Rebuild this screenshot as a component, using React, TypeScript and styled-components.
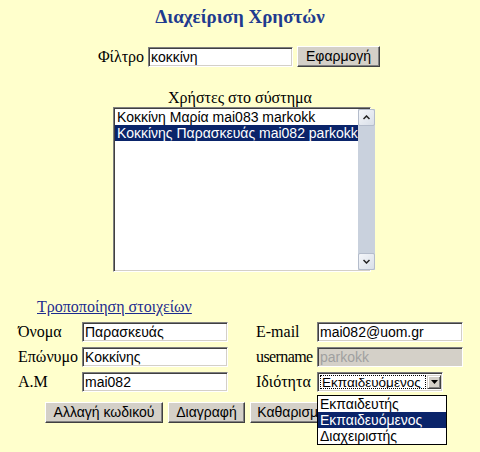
import React from 'react';
import styled, { createGlobalStyle } from 'styled-components';

const GlobalStyle = createGlobalStyle`
  html, body {
    margin: 0;
    padding: 0;
    background: #ffffcc;
  }
  body {
    font-family: "Liberation Serif", "Times New Roman", serif;
    color: #000;
  }
`;

const Page = styled.div`
  width: 480px;
  height: 452px;
  overflow: hidden;
  padding-top: 7px;
  box-sizing: border-box;
`;

const Title = styled.h2`
  margin: 0;
  text-align: center;
  font-family: "Liberation Serif", serif;
  font-weight: bold;
  font-size: 19px;
  line-height: 20px;
  color: #1f3b8f;
`;

const FilterRow = styled.div`
  display: flex;
  justify-content: center;
  align-items: center;
  gap: 4px;
  margin-top: 19px;
  height: 21px;
  padding-right: 2px;
`;

const Label = styled.span<{ $tight?: boolean }>`
  font-family: "Liberation Serif", serif;
  font-size: 16px;
  line-height: 18px;
  letter-spacing: ${(p) => (p.$tight ? '-0.6px' : 'normal')};
  white-space: nowrap;
`;

const TextInput = styled.div<{ $width: number; $disabled?: boolean }>`
  box-sizing: border-box;
  width: ${(p) => p.$width}px;
  height: 20px;
  padding: 1px 2px 0;
  background: ${(p) => (p.$disabled ? '#d4d0c8' : '#fff')};
  color: ${(p) => (p.$disabled ? '#a0a0a0' : '#000')};
  border-top: 1px solid #808080;
  border-left: 1px solid #808080;
  border-bottom: 1px solid #fff;
  border-right: 1px solid #fff;
  box-shadow: inset 1px 1px 0 #404040, inset -1px -1px 0 #d4d0c8;
  font-family: "Liberation Sans", Arial, sans-serif;
  font-size: 14px;
  line-height: 17px;
  white-space: nowrap;
  overflow: hidden;
`;

const Button = styled.div<{ $width: number }>`
  box-sizing: border-box;
  width: ${(p) => p.$width}px;
  height: 21px;
  background: #d4d0c8;
  border-top: 1px solid #fff;
  border-left: 1px solid #fff;
  border-bottom: 1px solid #404040;
  border-right: 1px solid #404040;
  box-shadow: inset -1px -1px 0 #808080;
  font-family: "Liberation Sans", Arial, sans-serif;
  font-size: 14px;
  line-height: 18px;
  text-align: center;
  white-space: nowrap;
  overflow: hidden;
`;

const Caption = styled.div`
  margin-top: 22px;
  text-align: center;
  font-family: "Liberation Serif", serif;
  font-size: 16px;
  line-height: 18px;
`;

const ListBox = styled.div`
  box-sizing: border-box;
  width: 258px;
  height: 165px;
  margin-left: 113px;
  display: flex;
  background: #fff;
  border-top: 1px solid #808080;
  border-left: 1px solid #808080;
  border-bottom: 1px solid #fff;
  border-right: 1px solid #fff;
  box-shadow: inset 1px 1px 0 #404040, inset -1px -1px 0 #d4d0c8;
  padding: 1px;
`;

const ListItems = styled.div`
  flex: 1;
  display: flex;
  flex-direction: column;
`;

const ListItem = styled.div<{ $selected?: boolean }>`
  height: 16px;
  padding-left: 2px;
  font-family: "Liberation Sans", Arial, sans-serif;
  font-size: 14px;
  line-height: 16px;
  white-space: nowrap;
  background: ${(p) => (p.$selected ? '#0a246a' : 'transparent')};
  color: ${(p) => (p.$selected ? '#fff' : '#000')};
`;

const ScrollBar = styled.div`
  width: 17px;
  display: flex;
  flex-direction: column;
  justify-content: space-between;
  background: #c9d1dd;
`;

const ScrollButton = styled.div`
  box-sizing: border-box;
  width: 17px;
  height: 17px;
  display: flex;
  align-items: center;
  justify-content: center;
  background: linear-gradient(135deg, #f4f6fa, #d9dfe8);
  border: 1px solid #b4bccb;
  border-radius: 2px;
`;

const EditLink = styled.a`
  display: block;
  margin: 26px 0 0 37px;
  width: fit-content;
  font-family: "Liberation Serif", serif;
  font-size: 16px;
  line-height: 18px;
  color: #1d2c8f;
  text-decoration: underline;
`;

const FormGrid = styled.div`
  display: grid;
  grid-template-columns: 64px 146px 28px 61px 146px;
  grid-auto-rows: 20px;
  row-gap: 5px;
  margin: 6px 0 0 18px;
  align-items: center;
`;

const Spacer = styled.div``;

const SelectWrap = styled.div`
  position: relative;
  width: 126px;
  height: 20px;
`;

const SelectBox = styled.div`
  box-sizing: border-box;
  width: 126px;
  height: 20px;
  display: flex;
  align-items: stretch;
  background: #fff;
  border-top: 1px solid #808080;
  border-left: 1px solid #808080;
  border-bottom: 1px solid #fff;
  border-right: 1px solid #fff;
  box-shadow: inset 1px 1px 0 #404040, inset -1px -1px 0 #d4d0c8;
  padding: 2px 1px 2px 2px;
  gap: 1px;
`;

const SelectValue = styled.div`
  flex: 1;
  border: 1px dotted #000;
  font-family: "Liberation Sans", Arial, sans-serif;
  font-size: 13.5px;
  line-height: 13px;
  padding-left: 1px;
  white-space: nowrap;
  overflow: hidden;
`;

const SelectArrow = styled.div`
  box-sizing: border-box;
  width: 14px;
  display: flex;
  align-items: center;
  justify-content: center;
  background: #d4d0c8;
  border-top: 1px solid #d4d0c8;
  border-left: 1px solid #d4d0c8;
  border-bottom: 1px solid #404040;
  border-right: 1px solid #404040;
  box-shadow: inset 1px 1px 0 #fff, inset -1px -1px 0 #808080;
`;

const DropList = styled.div`
  position: absolute;
  left: 0;
  top: 23px;
  width: 130px;
  box-sizing: border-box;
  background: #fff;
  border: 1px solid #000;
  z-index: 5;
`;

const DropItem = styled.div<{ $selected?: boolean }>`
  height: 16px;
  padding-left: 2px;
  font-family: "Liberation Sans", Arial, sans-serif;
  font-size: 14px;
  line-height: 16px;
  background: ${(p) => (p.$selected ? '#0a246a' : '#fff')};
  color: ${(p) => (p.$selected ? '#fff' : '#000')};
`;

const ButtonRow = styled.div`
  display: flex;
  gap: 5px;
  margin: 10px 0 0 45px;
`;

const users = [
  { text: 'Κοκκίνη Μαρία mai083 markokk', selected: false },
  { text: 'Κοκκίνης Παρασκευάς mai082 parkokk', selected: true },
];

const roles = ['Εκπαιδευτής', 'Εκπαιδευόμενος', 'Διαχειριστής'];

const Chevron: React.FC<{ up?: boolean }> = ({ up }) => (
  <svg width="7" height="5" viewBox="0 0 7 5">
    <path d={up ? 'M0.5 4 L3.5 1 L6.5 4' : 'M0.5 1 L3.5 4 L6.5 1'} stroke="#222" strokeWidth="1.5" fill="none" />
  </svg>
);

const App: React.FC = () => {
  return (
    <Page>
      <GlobalStyle />
      <Title>Διαχείριση Χρηστών</Title>
      <FilterRow>
        <Label>Φίλτρο</Label>
        <TextInput $width={145}>κοκκίνη</TextInput>
        <Button $width={83}>Εφαρμογή</Button>
      </FilterRow>

      <Caption>Χρήστες στο σύστημα</Caption>
      <ListBox>
        <ListItems>
          {users.map((u) => (
            <ListItem key={u.text} $selected={u.selected}>{u.text}</ListItem>
          ))}
        </ListItems>
        <ScrollBar>
          <ScrollButton><Chevron up /></ScrollButton>
          <ScrollButton><Chevron /></ScrollButton>
        </ScrollBar>
      </ListBox>

      <EditLink href="#">Τροποποίηση στοιχείων</EditLink>
      <FormGrid>
        <Label>Όνομα</Label>
        <TextInput $width={146}>Παρασκευάς</TextInput>
        <Spacer />
        <Label>E-mail</Label>
        <TextInput $width={146}>mai082@uom.gr</TextInput>

        <Label>Επώνυμο</Label>
        <TextInput $width={146}>Κοκκίνης</TextInput>
        <Spacer />
        <Label $tight>username</Label>
        <TextInput $width={146} $disabled>parkokk</TextInput>

        <Label>Α.Μ</Label>
        <TextInput $width={146}>mai082</TextInput>
        <Spacer />
        <Label>Ιδιότητα</Label>
        <SelectWrap>
          <SelectBox>
            <SelectValue>Εκπαιδευόμενος</SelectValue>
            <SelectArrow>
              <svg width="7" height="4" viewBox="0 0 7 4">
                <path d="M0 0 H7 L3.5 4 Z" fill="#000" />
              </svg>
            </SelectArrow>
          </SelectBox>
          <DropList>
            {roles.map((r) => (
              <DropItem key={r} $selected={r === 'Εκπαιδευόμενος'}>{r}</DropItem>
            ))}
          </DropList>
        </SelectWrap>
      </FormGrid>

      <ButtonRow>
        <Button $width={118}>Αλλαγή κωδικού</Button>
        <Button $width={77}>Διαγραφή</Button>
        <Button $width={90}>Καθαρισμός</Button>
      </ButtonRow>
    </Page>
  );
};

export default App;
